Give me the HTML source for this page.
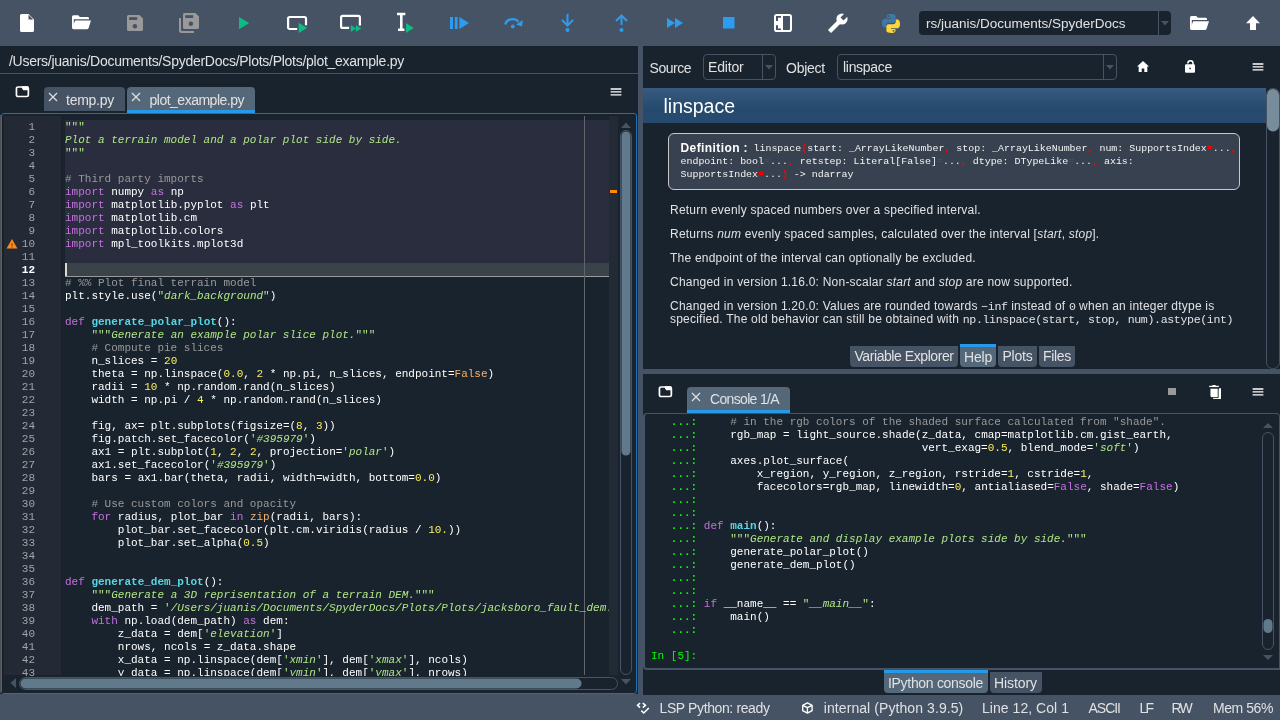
<!DOCTYPE html>
<html><head><meta charset="utf-8"><style>
html,body{margin:0;padding:0;}
body{width:1280px;height:720px;position:relative;overflow:hidden;background:#19232D;font-family:'Liberation Sans', sans-serif;}
body div, body svg{position:absolute;white-space:pre;}
.root{position:absolute;left:0;top:0;width:1280px;height:720px;will-change:transform;}
.code{font-family:'Liberation Mono', monospace;font-size:11px;line-height:13px;white-space:pre;}
</style></head><body>
<div class="root">
<div style="left:0px;top:0px;width:1280px;height:46px;background:#455364;"></div>
<div style="left:0px;top:46px;width:638px;height:648px;background:#19232D;"></div>
<div style="left:9px;top:51.65px;line-height:18px;font-family:'Liberation Sans', sans-serif;font-size:14px;color:#E0E1E3;letter-spacing:-0.268px;">/Users/juanis/Documents/SpyderDocs/Plots/Plots/plot_example.py</div>
<div style="left:0px;top:73px;width:638px;height:1px;background:#455364;"></div>
<div style="left:638px;top:46px;width:5px;height:648px;background:#455364;"></div>
<svg style="left:15px;top:86px" width="15" height="12" viewBox="0 0 15 12"><rect x="1.45" y="1" width="11.9" height="9.5" rx="1.6" fill="none" stroke="#fff" stroke-width="1.7"/><path d="M6.5 0.3H13.3V4.3H8.2L7 2.2Z" fill="#fff"/></svg>
<div style="left:44px;top:87px;width:81px;height:24px;background:#455364;border-radius:4px 4px 0 0;"></div>
<div style="left:127px;top:87px;width:128px;height:23px;background:#54687A;border-radius:4px 4px 0 0;"></div>
<div style="left:127px;top:110px;width:128px;height:3px;background:#259AE9;"></div>
<svg style="left:48px;top:92px" width="10" height="10" viewBox="0 0 10 10"><path d="M1 1L9 9M9 1L1 9" stroke="#E0E1E3" stroke-width="1.2"/></svg>
<svg style="left:131px;top:92px" width="10" height="10" viewBox="0 0 10 10"><path d="M1 1L9 9M9 1L1 9" stroke="#E0E1E3" stroke-width="1.2"/></svg>
<div style="left:66px;top:90.65px;line-height:18px;font-family:'Liberation Sans', sans-serif;font-size:14px;color:#E0E1E3;letter-spacing:-0.259px;">temp.py</div>
<div style="left:149.5px;top:90.65px;line-height:18px;font-family:'Liberation Sans', sans-serif;font-size:14px;color:#E0E1E3;letter-spacing:-0.497px;">plot_example.py</div>
<svg style="left:610px;top:87.75px" width="12" height="10" viewBox="0 0 12 10"><path d="M0.6 1H11.4M0.6 3.90H11.4M0.6 6.80H11.4" stroke="#fff" stroke-width="1.35"/></svg>
<div style="left:1px;top:113px;width:636px;height:581px;background:#19232D;box-sizing:border-box;border:1px solid #1A72BB;border-radius:3px;"></div>
<div style="left:0px;top:115px;width:1px;height:578px;background:#4b5159;"></div>
<div style="left:4px;top:116px;width:57px;height:559px;background:#232a35;"></div>
<div style="left:2px;top:116px;width:1px;height:577px;background:#1b1f24;"></div>
<div style="left:65px;top:120px;width:544px;height:143px;background:#292d3e;"></div>
<div style="left:65px;top:263px;width:544px;height:13px;background:#3a424a;"></div>
<div style="left:65px;top:276px;width:544px;height:1px;background:#9a9a9a;"></div>
<div style="left:65px;top:263px;width:2px;height:13px;background:#e0d8c8;"></div>
<div style="left:584px;top:116px;width:1px;height:559px;background:#60656a;"></div>
<div style="left:609px;top:116px;width:9px;height:559px;background:#222b35;"></div>
<div style="left:610px;top:190px;width:7px;height:3px;background:#ff8c00;"></div>
<svg style="left:618px;top:116px" width="18" height="575" viewBox="0 0 18 575"><path d="M3 12L8 6.5L13 12Z" fill="#455364"/><rect x="2.5" y="14.5" width="11" height="544" rx="5.5" fill="none" stroke="#455364"/><rect x="3.5" y="15.5" width="9" height="324" rx="4.5" fill="#60798B"/><path d="M3 563L8 568.5L13 563Z" fill="#455364"/></svg>
<svg style="left:2px;top:675px" width="616" height="18" viewBox="0 0 616 18"><path d="M14 3L8.5 8L14 13Z" fill="#455364"/><rect x="17.5" y="2.5" width="598" height="12" rx="6" fill="none" stroke="#455364"/><rect x="18.5" y="3.5" width="561" height="10" rx="5" fill="#60798B"/></svg>
<div class="code" style="left:65px;top:120.5px;width:544px;height:555px;overflow:hidden;"><span style="color:#b0e686">&quot;&quot;&quot;</span>
<span style="color:#b0e686;font-style:italic">Plot a terrain model and a polar plot side by side.</span>
<span style="color:#b0e686">&quot;&quot;&quot;</span>

<span style="color:#999999;"># Third party imports</span>
<span style="color:#c670e0;">import</span><span style="color:#ffffff;"> </span><span style="color:#ffffff;">numpy</span><span style="color:#ffffff;"> </span><span style="color:#c670e0;">as</span><span style="color:#ffffff;"> </span><span style="color:#ffffff;">np</span>
<span style="color:#c670e0;">import</span><span style="color:#ffffff;"> </span><span style="color:#ffffff;">matplotlib</span><span style="color:#ffffff;">.</span><span style="color:#ffffff;">pyplot</span><span style="color:#ffffff;"> </span><span style="color:#c670e0;">as</span><span style="color:#ffffff;"> </span><span style="color:#ffffff;">plt</span>
<span style="color:#c670e0;">import</span><span style="color:#ffffff;"> </span><span style="color:#ffffff;">matplotlib</span><span style="color:#ffffff;">.</span><span style="color:#ffffff;">cm</span>
<span style="color:#c670e0;">import</span><span style="color:#ffffff;"> </span><span style="color:#ffffff;">matplotlib</span><span style="color:#ffffff;">.</span><span style="color:#ffffff;">colors</span>
<span style="color:#c670e0;">import</span><span style="color:#ffffff;"> </span><span style="color:#ffffff;">mpl_toolkits</span><span style="color:#ffffff;">.</span><span style="color:#ffffff;">mplot3d</span>


<span style="color:#999999;"># %% Plot final terrain model</span>
<span style="color:#ffffff;">plt</span><span style="color:#ffffff;">.</span><span style="color:#ffffff;">style</span><span style="color:#ffffff;">.</span><span style="color:#ffffff;">use</span><span style="color:#ffffff;">(</span><span style="color:#b0e686">&quot;</span><span style="color:#b0e686;font-style:italic">dark_background</span><span style="color:#b0e686">&quot;</span><span style="color:#ffffff;">)</span>

<span style="color:#c670e0;">def</span><span style="color:#ffffff;"> </span><span style="color:#57d6e4;font-weight:bold;">generate_polar_plot</span><span style="color:#ffffff;">():</span>
<span style="color:#ffffff;">    </span><span style="color:#b0e686">&quot;&quot;&quot;</span><span style="color:#b0e686;font-style:italic">Generate an example polar slice plot.</span><span style="color:#b0e686">&quot;&quot;&quot;</span>
<span style="color:#ffffff;">    </span><span style="color:#999999;"># Compute pie slices</span>
<span style="color:#ffffff;">    </span><span style="color:#ffffff;">n_slices</span><span style="color:#ffffff;"> = </span><span style="color:#faed5c;">20</span>
<span style="color:#ffffff;">    </span><span style="color:#ffffff;">theta</span><span style="color:#ffffff;"> = </span><span style="color:#ffffff;">np</span><span style="color:#ffffff;">.</span><span style="color:#ffffff;">linspace</span><span style="color:#ffffff;">(</span><span style="color:#faed5c;">0.0</span><span style="color:#ffffff;">, </span><span style="color:#faed5c;">2</span><span style="color:#ffffff;"> * </span><span style="color:#ffffff;">np</span><span style="color:#ffffff;">.</span><span style="color:#ffffff;">pi</span><span style="color:#ffffff;">, </span><span style="color:#ffffff;">n_slices</span><span style="color:#ffffff;">, </span><span style="color:#ffffff;">endpoint</span><span style="color:#ffffff;">=</span><span style="color:#fab16c;">False</span><span style="color:#ffffff;">)</span>
<span style="color:#ffffff;">    </span><span style="color:#ffffff;">radii</span><span style="color:#ffffff;"> = </span><span style="color:#faed5c;">10</span><span style="color:#ffffff;"> * </span><span style="color:#ffffff;">np</span><span style="color:#ffffff;">.</span><span style="color:#ffffff;">random</span><span style="color:#ffffff;">.</span><span style="color:#ffffff;">rand</span><span style="color:#ffffff;">(</span><span style="color:#ffffff;">n_slices</span><span style="color:#ffffff;">)</span>
<span style="color:#ffffff;">    </span><span style="color:#ffffff;">width</span><span style="color:#ffffff;"> = </span><span style="color:#ffffff;">np</span><span style="color:#ffffff;">.</span><span style="color:#ffffff;">pi</span><span style="color:#ffffff;"> / </span><span style="color:#faed5c;">4</span><span style="color:#ffffff;"> * </span><span style="color:#ffffff;">np</span><span style="color:#ffffff;">.</span><span style="color:#ffffff;">random</span><span style="color:#ffffff;">.</span><span style="color:#ffffff;">rand</span><span style="color:#ffffff;">(</span><span style="color:#ffffff;">n_slices</span><span style="color:#ffffff;">)</span>

<span style="color:#ffffff;">    </span><span style="color:#ffffff;">fig</span><span style="color:#ffffff;">, </span><span style="color:#ffffff;">ax</span><span style="color:#ffffff;">= </span><span style="color:#ffffff;">plt</span><span style="color:#ffffff;">.</span><span style="color:#ffffff;">subplots</span><span style="color:#ffffff;">(</span><span style="color:#ffffff;">figsize</span><span style="color:#ffffff;">=(</span><span style="color:#faed5c;">8</span><span style="color:#ffffff;">, </span><span style="color:#faed5c;">3</span><span style="color:#ffffff;">))</span>
<span style="color:#ffffff;">    </span><span style="color:#ffffff;">fig</span><span style="color:#ffffff;">.</span><span style="color:#ffffff;">patch</span><span style="color:#ffffff;">.</span><span style="color:#ffffff;">set_facecolor</span><span style="color:#ffffff;">(</span><span style="color:#b0e686">&#x27;</span><span style="color:#b0e686;font-style:italic">#395979</span><span style="color:#b0e686">&#x27;</span><span style="color:#ffffff;">)</span>
<span style="color:#ffffff;">    </span><span style="color:#ffffff;">ax1</span><span style="color:#ffffff;"> = </span><span style="color:#ffffff;">plt</span><span style="color:#ffffff;">.</span><span style="color:#ffffff;">subplot</span><span style="color:#ffffff;">(</span><span style="color:#faed5c;">1</span><span style="color:#ffffff;">, </span><span style="color:#faed5c;">2</span><span style="color:#ffffff;">, </span><span style="color:#faed5c;">2</span><span style="color:#ffffff;">, </span><span style="color:#ffffff;">projection</span><span style="color:#ffffff;">=</span><span style="color:#b0e686">&#x27;</span><span style="color:#b0e686;font-style:italic">polar</span><span style="color:#b0e686">&#x27;</span><span style="color:#ffffff;">)</span>
<span style="color:#ffffff;">    </span><span style="color:#ffffff;">ax1</span><span style="color:#ffffff;">.</span><span style="color:#ffffff;">set_facecolor</span><span style="color:#ffffff;">(</span><span style="color:#b0e686">&#x27;</span><span style="color:#b0e686;font-style:italic">#395979</span><span style="color:#b0e686">&#x27;</span><span style="color:#ffffff;">)</span>
<span style="color:#ffffff;">    </span><span style="color:#ffffff;">bars</span><span style="color:#ffffff;"> = </span><span style="color:#ffffff;">ax1</span><span style="color:#ffffff;">.</span><span style="color:#ffffff;">bar</span><span style="color:#ffffff;">(</span><span style="color:#ffffff;">theta</span><span style="color:#ffffff;">, </span><span style="color:#ffffff;">radii</span><span style="color:#ffffff;">, </span><span style="color:#ffffff;">width</span><span style="color:#ffffff;">=</span><span style="color:#ffffff;">width</span><span style="color:#ffffff;">, </span><span style="color:#ffffff;">bottom</span><span style="color:#ffffff;">=</span><span style="color:#faed5c;">0.0</span><span style="color:#ffffff;">)</span>

<span style="color:#ffffff;">    </span><span style="color:#999999;"># Use custom colors and opacity</span>
<span style="color:#ffffff;">    </span><span style="color:#c670e0;">for</span><span style="color:#ffffff;"> </span><span style="color:#ffffff;">radius</span><span style="color:#ffffff;">, </span><span style="color:#ffffff;">plot_bar</span><span style="color:#ffffff;"> </span><span style="color:#c670e0;">in</span><span style="color:#ffffff;"> </span><span style="color:#fab16c;">zip</span><span style="color:#ffffff;">(</span><span style="color:#ffffff;">radii</span><span style="color:#ffffff;">, </span><span style="color:#ffffff;">bars</span><span style="color:#ffffff;">):</span>
<span style="color:#ffffff;">        </span><span style="color:#ffffff;">plot_bar</span><span style="color:#ffffff;">.</span><span style="color:#ffffff;">set_facecolor</span><span style="color:#ffffff;">(</span><span style="color:#ffffff;">plt</span><span style="color:#ffffff;">.</span><span style="color:#ffffff;">cm</span><span style="color:#ffffff;">.</span><span style="color:#ffffff;">viridis</span><span style="color:#ffffff;">(</span><span style="color:#ffffff;">radius</span><span style="color:#ffffff;"> / </span><span style="color:#faed5c;">10.</span><span style="color:#ffffff;">))</span>
<span style="color:#ffffff;">        </span><span style="color:#ffffff;">plot_bar</span><span style="color:#ffffff;">.</span><span style="color:#ffffff;">set_alpha</span><span style="color:#ffffff;">(</span><span style="color:#faed5c;">0.5</span><span style="color:#ffffff;">)</span>


<span style="color:#c670e0;">def</span><span style="color:#ffffff;"> </span><span style="color:#57d6e4;font-weight:bold;">generate_dem_plot</span><span style="color:#ffffff;">():</span>
<span style="color:#ffffff;">    </span><span style="color:#b0e686">&quot;&quot;&quot;</span><span style="color:#b0e686;font-style:italic">Generate a 3D reprisentation of a terrain DEM.</span><span style="color:#b0e686">&quot;&quot;&quot;</span>
<span style="color:#ffffff;">    </span><span style="color:#ffffff;">dem_path</span><span style="color:#ffffff;"> = </span><span style="color:#b0e686">&#x27;</span><span style="color:#b0e686;font-style:italic">/Users/juanis/Documents/SpyderDocs/Plots/Plots/jacksboro_fault_dem.npz</span><span style="color:#b0e686">&#x27;</span>
<span style="color:#ffffff;">    </span><span style="color:#c670e0;">with</span><span style="color:#ffffff;"> </span><span style="color:#ffffff;">np</span><span style="color:#ffffff;">.</span><span style="color:#ffffff;">load</span><span style="color:#ffffff;">(</span><span style="color:#ffffff;">dem_path</span><span style="color:#ffffff;">) </span><span style="color:#c670e0;">as</span><span style="color:#ffffff;"> </span><span style="color:#ffffff;">dem</span><span style="color:#ffffff;">:</span>
<span style="color:#ffffff;">        </span><span style="color:#ffffff;">z_data</span><span style="color:#ffffff;"> = </span><span style="color:#ffffff;">dem</span><span style="color:#ffffff;">[</span><span style="color:#b0e686">&#x27;</span><span style="color:#b0e686;font-style:italic">elevation</span><span style="color:#b0e686">&#x27;</span><span style="color:#ffffff;">]</span>
<span style="color:#ffffff;">        </span><span style="color:#ffffff;">nrows</span><span style="color:#ffffff;">, </span><span style="color:#ffffff;">ncols</span><span style="color:#ffffff;"> = </span><span style="color:#ffffff;">z_data</span><span style="color:#ffffff;">.</span><span style="color:#ffffff;">shape</span>
<span style="color:#ffffff;">        </span><span style="color:#ffffff;">x_data</span><span style="color:#ffffff;"> = </span><span style="color:#ffffff;">np</span><span style="color:#ffffff;">.</span><span style="color:#ffffff;">linspace</span><span style="color:#ffffff;">(</span><span style="color:#ffffff;">dem</span><span style="color:#ffffff;">[</span><span style="color:#b0e686">&#x27;</span><span style="color:#b0e686;font-style:italic">xmin</span><span style="color:#b0e686">&#x27;</span><span style="color:#ffffff;">], </span><span style="color:#ffffff;">dem</span><span style="color:#ffffff;">[</span><span style="color:#b0e686">&#x27;</span><span style="color:#b0e686;font-style:italic">xmax</span><span style="color:#b0e686">&#x27;</span><span style="color:#ffffff;">], </span><span style="color:#ffffff;">ncols</span><span style="color:#ffffff;">)</span>
<span style="color:#ffffff;">        </span><span style="color:#ffffff;">y_data</span><span style="color:#ffffff;"> = </span><span style="color:#ffffff;">np</span><span style="color:#ffffff;">.</span><span style="color:#ffffff;">linspace</span><span style="color:#ffffff;">(</span><span style="color:#ffffff;">dem</span><span style="color:#ffffff;">[</span><span style="color:#b0e686">&#x27;</span><span style="color:#b0e686;font-style:italic">ymin</span><span style="color:#b0e686">&#x27;</span><span style="color:#ffffff;">], </span><span style="color:#ffffff;">dem</span><span style="color:#ffffff;">[</span><span style="color:#b0e686">&#x27;</span><span style="color:#b0e686;font-style:italic">ymax</span><span style="color:#b0e686">&#x27;</span><span style="color:#ffffff;">], </span><span style="color:#ffffff;">nrows</span><span style="color:#ffffff;">)</span></div>
<div class="code" style="left:0px;top:120.5px;width:35px;height:555px;overflow:hidden;color:#a0a4a8;text-align:right;"> 1
 2
 3
 4
 5
 6
 7
 8
 9
10
11
<span style="color:#fff;font-weight:bold">12</span>
13
14
15
16
17
18
19
20
21
22
23
24
25
26
27
28
29
30
31
32
33
34
35
36
37
38
39
40
41
42
43</div>
<svg style="left:5.5px;top:238.5px" width="12" height="10" viewBox="0 0 12 10"><path d="M6 0L11.4 9.4H0.6Z" fill="#ff8914"/><rect x="5.45" y="4.3" width="1.1" height="2.6" rx="0.5" fill="#5a3a1a"/><rect x="5.45" y="7.6" width="1.1" height="1" fill="#5a3a1a"/></svg>
<div style="left:649.5px;top:58.65px;line-height:18px;font-family:'Liberation Sans', sans-serif;font-size:14px;color:#E0E1E3;letter-spacing:-0.460px;">Source</div>
<div style="left:703px;top:54px;width:73px;height:26px;background:#19232D;box-sizing:border-box;border:1px solid #455364;border-radius:4px;"></div>
<div style="left:762px;top:55px;width:1px;height:24px;background:#455364;"></div>
<svg style="left:765px;top:65px" width="8" height="5" viewBox="0 0 8 5"><path d="M0 0H8L4 4.5Z" fill="#455364"/></svg>
<div style="left:708px;top:57.65px;line-height:18px;font-family:'Liberation Sans', sans-serif;font-size:14px;color:#E0E1E3;letter-spacing:-0.180px;">Editor</div>
<div style="left:786px;top:58.65px;line-height:18px;font-family:'Liberation Sans', sans-serif;font-size:14px;color:#E0E1E3;letter-spacing:-0.245px;">Object</div>
<div style="left:837px;top:54px;width:280px;height:26px;background:#19232D;box-sizing:border-box;border:1px solid #455364;border-radius:4px;"></div>
<div style="left:1103px;top:55px;width:1px;height:24px;background:#455364;"></div>
<svg style="left:1106px;top:65px" width="8" height="5" viewBox="0 0 8 5"><path d="M0 0H8L4 4.5Z" fill="#455364"/></svg>
<div style="left:843px;top:57.65px;line-height:18px;font-family:'Liberation Sans', sans-serif;font-size:14px;color:#E0E1E3;letter-spacing:-0.297px;">linspace</div>
<svg style="left:1137px;top:61px" width="12" height="11" viewBox="0 0 12 11"><path d="M6 0L12 5.5H10.3V11H7.3V7.5H4.7V11H1.7V5.5H0Z" fill="#fff"/></svg>
<svg style="left:1184px;top:59px" width="12" height="15" viewBox="0 0 12 15"><path d="M3.9 4.6V4.3A2.55 2.55 0 0 1 9 4.3V6" fill="none" stroke="#fff" stroke-width="1.5"/><rect x="1" y="5.3" width="10" height="8.5" rx="1.3" fill="#fff"/><rect x="5.3" y="8.7" width="1.5" height="1.5" fill="#19232D"/></svg>
<svg style="left:1252px;top:62.65px" width="12" height="10" viewBox="0 0 12 10"><path d="M0.6 1H11.4M0.6 3.90H11.4M0.6 6.80H11.4" stroke="#fff" stroke-width="1.35"/></svg>
<div style="left:643px;top:88px;width:623px;height:35px;background:linear-gradient(#395b81 0%,#2a4d72 45%,#264a6e 60%,#274b6f 100%);"></div>
<div style="left:663.5px;top:93.74px;line-height:25px;font-family:'Liberation Sans', sans-serif;font-size:19.5px;color:#ffffff;letter-spacing:-0.006px;">linspace</div>
<div style="left:1266px;top:88px;width:14px;height:281px;background:#19232D;"></div>
<svg style="left:1266px;top:88px" width="14" height="281" viewBox="0 0 14 281"><rect x="1" y="1" width="12" height="42.5" rx="6" fill="#788D9C"/><rect x="0.5" y="0.5" width="13" height="280" rx="6" fill="none" stroke="#455364"/></svg>
<div style="left:668px;top:133px;width:572px;height:57px;background:#37414F;box-sizing:border-box;border:1px solid #c8c8c8;border-radius:6px;"></div>
<div style="left:680.5px;top:140.34px;line-height:16px;font-family:'Liberation Sans', sans-serif;font-size:12px;color:#ffffff;font-weight:bold;letter-spacing:0.404px;">Definition :</div>
<div style="left:753.5px;top:142.9px;font-family:'Liberation Mono', monospace;font-size:9.95px;line-height:12px;color:#f4f4f4"><span style="color:#f4f4f4">linspace</span><span style="color:#ff0000;font-weight:bold">(</span><span style="color:#f4f4f4">start: _ArrayLikeNumber</span><span style="color:#ff0000;font-weight:bold">,</span><span style="color:#f4f4f4"> stop: _ArrayLikeNumber</span><span style="color:#ff0000;font-weight:bold">,</span><span style="color:#f4f4f4"> num: SupportsIndex</span><span style="color:#ff0000;font-weight:bold">=</span><span style="color:#f4f4f4">...</span><span style="color:#ff0000;font-weight:bold">,</span></div>
<div style="left:680.5px;top:155.9px;font-family:'Liberation Mono', monospace;font-size:9.95px;line-height:12px;color:#f4f4f4"><span style="color:#f4f4f4">endpoint: bool</span><span style="color:#ff0000;font-weight:bold">=</span><span style="color:#f4f4f4">...</span><span style="color:#ff0000;font-weight:bold">,</span><span style="color:#f4f4f4"> retstep: Literal[False]</span><span style="color:#ff0000;font-weight:bold">=</span><span style="color:#f4f4f4">...</span><span style="color:#ff0000;font-weight:bold">,</span><span style="color:#f4f4f4"> dtype: DTypeLike</span><span style="color:#ff0000;font-weight:bold">=</span><span style="color:#f4f4f4">...</span><span style="color:#ff0000;font-weight:bold">,</span><span style="color:#f4f4f4"> axis:</span></div>
<div style="left:680.5px;top:168.9px;font-family:'Liberation Mono', monospace;font-size:9.95px;line-height:12px;color:#f4f4f4"><span style="color:#f4f4f4">SupportsIndex</span><span style="color:#ff0000;font-weight:bold">=</span><span style="color:#f4f4f4">...</span><span style="color:#ff0000;font-weight:bold">)</span><span style="color:#f4f4f4"> -&gt; ndarray</span></div>
<div style="left:670px;top:202.8px;font-size:12px;line-height:14px;color:#E0E1E3;letter-spacing:0.22px">Return evenly spaced numbers over a specified interval.</div>
<div style="left:670px;top:226.8px;font-size:12px;line-height:14px;color:#E0E1E3;letter-spacing:0.22px">Returns <i>num</i> evenly spaced samples, calculated over the interval [<i>start</i>, <i>stop</i>].</div>
<div style="left:670px;top:250.8px;font-size:12px;line-height:14px;color:#E0E1E3;letter-spacing:0.22px">The endpoint of the interval can optionally be excluded.</div>
<div style="left:670px;top:274.8px;font-size:12px;line-height:14px;color:#E0E1E3;letter-spacing:0.22px">Changed in version 1.16.0: Non-scalar <i>start</i> and <i>stop</i> are now supported.</div>
<div style="left:670px;top:298.8px;font-size:12px;line-height:14px;color:#E0E1E3;letter-spacing:0.22px">Changed in version 1.20.0: Values are rounded towards <span style="font-family:'Liberation Mono', monospace;font-size:11.6px;letter-spacing:-0.36px">−inf</span> instead of <span style="font-family:'Liberation Mono', monospace;font-size:11.6px;letter-spacing:-0.36px">0</span> when an integer dtype is</div>
<div style="left:670px;top:311.8px;font-size:12px;line-height:14px;color:#E0E1E3;letter-spacing:0.22px">specified. The old behavior can still be obtained with <span style="font-family:'Liberation Mono', monospace;font-size:11.6px;letter-spacing:-0.36px">np.linspace(start, stop, num).astype(int)</span></div>
<div style="left:850px;top:346px;width:108px;height:21px;background:#455364;border-radius:0 0 4px 4px;"></div>
<div style="left:960px;top:347px;width:36px;height:20px;background:#54687A;border-radius:0 0 4px 4px;"></div>
<div style="left:960px;top:344px;width:36px;height:3px;background:#259AE9;"></div>
<div style="left:998px;top:346px;width:39px;height:21px;background:#455364;border-radius:0 0 4px 4px;"></div>
<div style="left:1039px;top:346px;width:36px;height:21px;background:#455364;border-radius:0 0 4px 4px;"></div>
<div style="left:854.5px;top:346.65px;line-height:18px;font-family:'Liberation Sans', sans-serif;font-size:14px;color:#E0E1E3;letter-spacing:-0.433px;">Variable Explorer</div>
<div style="left:964px;top:347.65px;line-height:18px;font-family:'Liberation Sans', sans-serif;font-size:14px;color:#E0E1E3;letter-spacing:-0.199px;">Help</div>
<div style="left:1002.5px;top:346.65px;line-height:18px;font-family:'Liberation Sans', sans-serif;font-size:14px;color:#E0E1E3;letter-spacing:-0.225px;">Plots</div>
<div style="left:1043px;top:346.65px;line-height:18px;font-family:'Liberation Sans', sans-serif;font-size:14px;color:#E0E1E3;letter-spacing:-0.312px;">Files</div>
<div style="left:643px;top:369px;width:637px;height:5px;background:#455364;"></div>
<svg style="left:658px;top:386px" width="15" height="12" viewBox="0 0 15 12"><rect x="1.45" y="1" width="11.9" height="9.5" rx="1.6" fill="none" stroke="#fff" stroke-width="1.7"/><path d="M6.5 0.3H13.3V4.3H8.2L7 2.2Z" fill="#fff"/></svg>
<div style="left:687px;top:387px;width:103px;height:23px;background:#54687A;border-radius:4px 4px 0 0;"></div>
<div style="left:687px;top:410px;width:103px;height:3px;background:#259AE9;"></div>
<svg style="left:691px;top:392px" width="10" height="10" viewBox="0 0 10 10"><path d="M1 1L9 9M9 1L1 9" stroke="#E0E1E3" stroke-width="1.2"/></svg>
<div style="left:710px;top:390.40px;line-height:18px;font-family:'Liberation Sans', sans-serif;font-size:14px;color:#E0E1E3;letter-spacing:-0.662px;">Console 1/A</div>
<div style="left:1168px;top:388px;width:8px;height:7px;background:#999999;"></div>
<svg style="left:1208px;top:384px" width="14" height="16" viewBox="0 0 14 16"><rect x="1.2" y="1.8" width="9.6" height="1.3" fill="#fff"/><rect x="4.2" y="0.9" width="3.6" height="1.3" rx="0.6" fill="#fff"/><path d="M5 5.2H10.8L11 4.2H13V15H5Z" fill="#fff"/><path d="M2 4.2H10.2V13.6H3.4L2 12.2Z" fill="#fff" stroke="#19232D" stroke-width="0.9"/></svg>
<svg style="left:1252px;top:387.75px" width="12" height="10" viewBox="0 0 12 10"><path d="M0.6 1H11.4M0.6 3.90H11.4M0.6 6.80H11.4" stroke="#fff" stroke-width="1.35"/></svg>
<div style="left:643px;top:413px;width:637px;height:257px;background:#19232D;box-sizing:border-box;border:1px solid #455364;border-left-width:2px;border-bottom-width:2px;border-radius:4px 4px 0 4px;"></div>
<svg style="left:1261px;top:420px" width="14" height="248" viewBox="0 0 14 248"><path d="M2 8L7 3L12 8Z" fill="#455364"/><rect x="1.5" y="12.5" width="11" height="217" rx="5.5" fill="none" stroke="#455364"/><rect x="2.5" y="199" width="9" height="14" rx="4.5" fill="#60798B"/><path d="M2 235L7 240L12 235Z" fill="#455364"/></svg>
<div class="code" style="left:651px;top:415.5px;width:608px;height:252px;overflow:hidden;"><span style="color:#00ff00">   </span><span style="color:#00ff00;font-weight:bold">...:</span> <span style="color:#ffffff;">    </span><span style="color:#999999;"># in the rgb colors of the shaded surface calculated from &quot;shade&quot;.</span>
<span style="color:#00ff00">   </span><span style="color:#00ff00;font-weight:bold">...:</span> <span style="color:#ffffff;">    </span><span style="color:#ffffff;">rgb_map</span><span style="color:#ffffff;"> = </span><span style="color:#ffffff;">light_source</span><span style="color:#ffffff;">.</span><span style="color:#ffffff;">shade</span><span style="color:#ffffff;">(</span><span style="color:#ffffff;">z_data</span><span style="color:#ffffff;">, </span><span style="color:#ffffff;">cmap</span><span style="color:#ffffff;">=</span><span style="color:#ffffff;">matplotlib</span><span style="color:#ffffff;">.</span><span style="color:#ffffff;">cm</span><span style="color:#ffffff;">.</span><span style="color:#ffffff;">gist_earth</span><span style="color:#ffffff;">,</span>
<span style="color:#00ff00">   </span><span style="color:#00ff00;font-weight:bold">...:</span> <span style="color:#ffffff;">                                 </span><span style="color:#ffffff;">vert_exag</span><span style="color:#ffffff;">=</span><span style="color:#faed5c;">0.5</span><span style="color:#ffffff;">, </span><span style="color:#ffffff;">blend_mode</span><span style="color:#ffffff;">=</span><span style="color:#b0e686">&#x27;</span><span style="color:#b0e686;font-style:italic">soft</span><span style="color:#b0e686">&#x27;</span><span style="color:#ffffff;">)</span>
<span style="color:#00ff00">   </span><span style="color:#00ff00;font-weight:bold">...:</span> <span style="color:#ffffff;">    </span><span style="color:#ffffff;">axes</span><span style="color:#ffffff;">.</span><span style="color:#ffffff;">plot_surface</span><span style="color:#ffffff;">(</span>
<span style="color:#00ff00">   </span><span style="color:#00ff00;font-weight:bold">...:</span> <span style="color:#ffffff;">        </span><span style="color:#ffffff;">x_region</span><span style="color:#ffffff;">, </span><span style="color:#ffffff;">y_region</span><span style="color:#ffffff;">, </span><span style="color:#ffffff;">z_region</span><span style="color:#ffffff;">, </span><span style="color:#ffffff;">rstride</span><span style="color:#ffffff;">=</span><span style="color:#faed5c;">1</span><span style="color:#ffffff;">, </span><span style="color:#ffffff;">cstride</span><span style="color:#ffffff;">=</span><span style="color:#faed5c;">1</span><span style="color:#ffffff;">,</span>
<span style="color:#00ff00">   </span><span style="color:#00ff00;font-weight:bold">...:</span> <span style="color:#ffffff;">        </span><span style="color:#ffffff;">facecolors</span><span style="color:#ffffff;">=</span><span style="color:#ffffff;">rgb_map</span><span style="color:#ffffff;">, </span><span style="color:#ffffff;">linewidth</span><span style="color:#ffffff;">=</span><span style="color:#faed5c;">0</span><span style="color:#ffffff;">, </span><span style="color:#ffffff;">antialiased</span><span style="color:#ffffff;">=</span><span style="color:#c670e0;">False</span><span style="color:#ffffff;">, </span><span style="color:#ffffff;">shade</span><span style="color:#ffffff;">=</span><span style="color:#c670e0;">False</span><span style="color:#ffffff;">)</span>
<span style="color:#00ff00">   </span><span style="color:#00ff00;font-weight:bold">...:</span> 
<span style="color:#00ff00">   </span><span style="color:#00ff00;font-weight:bold">...:</span> 
<span style="color:#00ff00">   </span><span style="color:#00ff00;font-weight:bold">...:</span> <span style="color:#c670e0;">def</span><span style="color:#ffffff;"> </span><span style="color:#57d6e4;font-weight:bold;">main</span><span style="color:#ffffff;">():</span>
<span style="color:#00ff00">   </span><span style="color:#00ff00;font-weight:bold">...:</span> <span style="color:#ffffff;">    </span><span style="color:#b0e686">&quot;&quot;&quot;</span><span style="color:#b0e686;font-style:italic">Generate and display example plots side by side.</span><span style="color:#b0e686">&quot;&quot;&quot;</span>
<span style="color:#00ff00">   </span><span style="color:#00ff00;font-weight:bold">...:</span> <span style="color:#ffffff;">    </span><span style="color:#ffffff;">generate_polar_plot</span><span style="color:#ffffff;">()</span>
<span style="color:#00ff00">   </span><span style="color:#00ff00;font-weight:bold">...:</span> <span style="color:#ffffff;">    </span><span style="color:#ffffff;">generate_dem_plot</span><span style="color:#ffffff;">()</span>
<span style="color:#00ff00">   </span><span style="color:#00ff00;font-weight:bold">...:</span> 
<span style="color:#00ff00">   </span><span style="color:#00ff00;font-weight:bold">...:</span> 
<span style="color:#00ff00">   </span><span style="color:#00ff00;font-weight:bold">...:</span> <span style="color:#c670e0;">if</span><span style="color:#ffffff;"> </span><span style="color:#ffffff;">__name__</span><span style="color:#ffffff;"> == </span><span style="color:#b0e686">&quot;</span><span style="color:#b0e686;font-style:italic">__main__</span><span style="color:#b0e686">&quot;</span><span style="color:#ffffff;">:</span>
<span style="color:#00ff00">   </span><span style="color:#00ff00;font-weight:bold">...:</span> <span style="color:#ffffff;">    </span><span style="color:#ffffff;">main</span><span style="color:#ffffff;">()</span>
<span style="color:#00ff00">   </span><span style="color:#00ff00;font-weight:bold">...:</span> 

<span style="color:#00ff00">In [</span><span style="color:#00ff00">5</span><span style="color:#00ff00">]:</span> </div>
<div style="left:884px;top:670px;width:104px;height:3px;background:#259AE9;"></div>
<div style="left:884px;top:673px;width:104px;height:20px;background:#54687A;border-radius:0 0 4px 4px;"></div>
<div style="left:990px;top:672px;width:52px;height:21px;background:#455364;border-radius:0 0 4px 4px;"></div>
<div style="left:888px;top:673.65px;line-height:18px;font-family:'Liberation Sans', sans-serif;font-size:14px;color:#E0E1E3;letter-spacing:-0.308px;">IPython console</div>
<div style="left:994px;top:673.65px;line-height:18px;font-family:'Liberation Sans', sans-serif;font-size:14px;color:#E0E1E3;letter-spacing:-0.080px;">History</div>
<div style="left:0px;top:695px;width:1280px;height:25px;background:#455364;"></div>
<div style="left:0px;top:694px;width:643px;height:1px;background:#455364;"></div>
<svg style="left:636px;top:701px" width="14" height="14" viewBox="0 0 14 14"><path d="M4 2L1.6 4.3L4 6.6M6.8 2L9.4 4.3L6.8 6.6" fill="none" stroke="#fff" stroke-width="1.6"/><path d="M5.3 9.6L7.8 12L12.8 7" fill="none" stroke="#fff" stroke-width="1.6"/></svg>
<div style="left:659.5px;top:698.65px;line-height:18px;font-family:'Liberation Sans', sans-serif;font-size:14px;color:#E0E1E3;letter-spacing:-0.381px;">LSP Python: ready</div>
<svg style="left:801.5px;top:701.5px" width="11" height="12" viewBox="0 0 11 12"><path d="M5.4 0.9L10.1 3.3V8.7L5.4 11.1L0.7 8.7V3.3Z M0.7 3.3L5.4 5.7L10.1 3.3 M5.4 5.7V11.1" fill="none" stroke="#fff" stroke-width="1.4" stroke-linejoin="round"/></svg>
<div style="left:823.75px;top:698.65px;line-height:18px;font-family:'Liberation Sans', sans-serif;font-size:14px;color:#E0E1E3;letter-spacing:0.080px;">internal (Python 3.9.5)</div>
<div style="left:982px;top:698.65px;line-height:18px;font-family:'Liberation Sans', sans-serif;font-size:14px;color:#E0E1E3;letter-spacing:0.042px;">Line 12, Col 1</div>
<div style="left:1088.5px;top:698.65px;line-height:18px;font-family:'Liberation Sans', sans-serif;font-size:14px;color:#E0E1E3;letter-spacing:-1.016px;">ASCII</div>
<div style="left:1139.5px;top:698.65px;line-height:18px;font-family:'Liberation Sans', sans-serif;font-size:14px;color:#E0E1E3;letter-spacing:-1.672px;">LF</div>
<div style="left:1171.5px;top:698.65px;line-height:18px;font-family:'Liberation Sans', sans-serif;font-size:14px;color:#E0E1E3;letter-spacing:-1.789px;">RW</div>
<div style="left:1213px;top:698.65px;line-height:18px;font-family:'Liberation Sans', sans-serif;font-size:14px;color:#E0E1E3;letter-spacing:-0.433px;">Mem 56%</div>
<svg style="left:20px;top:14px" width="14" height="18" viewBox="0 0 14 18"><path d="M1.5 0H8.5L14 5.5V16.5A1.5 1.5 0 0 1 12.5 18H1.5A1.5 1.5 0 0 1 0 16.5V1.5A1.5 1.5 0 0 1 1.5 0Z" fill="#ffffff"/><path d="M8.5 0.8V5.5H13.2" fill="#455364"/></svg>
<svg style="left:72px;top:15px" width="19" height="15" viewBox="0 0 19 14.6"><path d="M1.5 0H6.2L7.9 1.7H15.6A1.4 1.4 0 0 1 17 3.1V4.1H1.8V10.5L0 13V1.5A1.5 1.5 0 0 1 1.5 0Z" fill="#ffffff"/><path d="M3.2 5.3H19L16.6 12.7A1.9 1.9 0 0 1 14.8 14H1.4A1.4 1.4 0 0 1 0 12.6Z" fill="#ffffff"/></svg>
<svg style="left:127px;top:15px" width="16" height="16" viewBox="0 0 16 16"><path d="M1.5 0H12.5L16 3.5V14.5A1.5 1.5 0 0 1 14.5 16H1.5A1.5 1.5 0 0 1 0 14.5V1.5A1.5 1.5 0 0 1 1.5 0Z" fill="#999999"/><rect x="2.2" y="2.2" width="8" height="2.8" fill="#455364"/><circle cx="7.9" cy="11.3" r="2.2" fill="#455364"/></svg>
<svg style="left:179px;top:13px" width="20" height="20" viewBox="0 0 20 20"><path d="M0 5V17.5A2.5 2.5 0 0 0 2.5 20H15V18H3A1 1 0 0 1 2 17V5Z" fill="#999999"/><path d="M5.5 0H16.5L20 3.5V14.5A1.5 1.5 0 0 1 18.5 16H5.5A1.5 1.5 0 0 1 4 14.5V1.5A1.5 1.5 0 0 1 5.5 0Z" fill="#999999"/><rect x="6.2" y="2.2" width="8" height="2.8" fill="#455364"/><circle cx="11.9" cy="10.8" r="2.2" fill="#455364"/></svg>
<svg style="left:239px;top:16.8px" width="10.2" height="12.3" viewBox="0 0 10.2 12.3"><path d="M0 0L10.2 6.15L0 12.3Z" fill="#0dbb85"/></svg>
<svg style="left:287px;top:15px" width="21" height="19" viewBox="0 0 21 19"><path d="M10.2 14H2.6A1.5 1.5 0 0 1 1.1 12.5V3.5A1.5 1.5 0 0 1 2.6 2H17.5A1.5 1.5 0 0 1 19 3.5V10.2" fill="none" stroke="#ffffff" stroke-width="2.2"/><path d="M11.7 7.8L20.1 12.9L11.7 18Z" fill="#0dbb85"/></svg>
<svg style="left:340px;top:14px" width="22" height="19" viewBox="0 0 22 19"><path d="M9.1 13.9H2.6A1.5 1.5 0 0 1 1.1 12.4V3.4A1.5 1.5 0 0 1 2.6 1.9H18.4A1.5 1.5 0 0 1 19.9 3.4V11.6" fill="none" stroke="#ffffff" stroke-width="2.2"/><path d="M10.8 10.9L16 14.5L10.8 18Z M15.8 10.9L21.2 14.5L15.8 18Z" fill="#0dbb85"/></svg>
<svg style="left:396px;top:12px" width="19" height="22" viewBox="0 0 19 22"><path d="M1 2H9.3M2 17.8H8.4M5.3 2V17.8" fill="none" stroke="#ffffff" stroke-width="2.6"/><path d="M10 11.1L17.7 16L10 21Z" fill="#0dbb85"/></svg>
<svg style="left:449.5px;top:17px" width="19" height="12" viewBox="0 0 19 12"><rect x="0" y="0" width="3" height="12" fill="#2d9cf0"/><rect x="4.8" y="0" width="2.8" height="12" fill="#2d9cf0"/><path d="M9.4 0L19 6L9.4 12Z" fill="#2d9cf0"/></svg>
<svg style="left:504px;top:17px" width="20" height="12" viewBox="0 0 20 12"><path d="M1.3 7.4A7.3 6.6 0 0 1 14.4 4.9" fill="none" stroke="#2d9cf0" stroke-width="2.3"/><path d="M12 7.6L18.8 3L18 9.4Z" fill="#2d9cf0"/><circle cx="8.8" cy="9.5" r="1.9" fill="#2d9cf0"/></svg>
<svg style="left:560.5px;top:14px" width="13" height="18" viewBox="0 0 13 18"><path d="M6.5 0V10" stroke="#2d9cf0" stroke-width="2"/><path d="M1 6L6.5 11.5L12 6" fill="none" stroke="#2d9cf0" stroke-width="2"/><circle cx="6.5" cy="16" r="2" fill="#2d9cf0"/></svg>
<svg style="left:614.5px;top:14px" width="13" height="18" viewBox="0 0 13 18"><path d="M6.5 2V11" stroke="#2d9cf0" stroke-width="2"/><path d="M1 7L6.5 1.5L12 7" fill="none" stroke="#2d9cf0" stroke-width="2"/><circle cx="6.5" cy="16" r="2" fill="#2d9cf0"/></svg>
<svg style="left:667px;top:18px" width="16" height="10" viewBox="0 0 16 10"><path d="M0 0L8 5L0 10Z M8 0L16 5L8 10Z" fill="#2d9cf0"/></svg>
<svg style="left:723px;top:17px" width="12" height="12" viewBox="0 0 12 12"><rect x="0" y="0" width="11.5" height="11.5" fill="#2d9cf0"/></svg>
<svg style="left:774px;top:14px" width="18" height="18" viewBox="0 0 18 18"><rect x="1" y="1" width="16" height="16" rx="1.8" fill="none" stroke="#ffffff" stroke-width="2"/><rect x="2" y="2" width="7" height="14" fill="#ffffff"/><path d="M2 2H7V3.8H4V6.9H2Z M2 11.2H4V14.5H7V16H2Z" fill="#455364"/></svg>
<svg style="left:827px;top:13px" width="21" height="21" viewBox="0 0 21 21"><defs><mask id="wm"><rect width="21" height="21" fill="#fff"/><path d="M15 6L23 -2" stroke="#000" stroke-width="4.2"/></mask></defs><g mask="url(#wm)"><circle cx="15" cy="6" r="5.6" fill="#ffffff"/><path d="M2.5 18.5L14 7" stroke="#ffffff" stroke-width="4.4"/></g></svg>
<svg style="left:882px;top:14px" width="18" height="19" viewBox="0 0 18 19"><path d="M8.8 0C4.3 0 4.6 2 4.6 2V4H9V4.7H3C3 4.7 0 4.4 0 9.1C0 13.8 2.6 13.6 2.6 13.6H4.2V11.4C4.2 11.4 4.1 8.8 6.8 8.8H11.1C11.1 8.8 13.6 8.8 13.6 6.4V2.4C13.6 2.4 14 0 8.8 0Z" fill="#3c78aa"/><circle cx="6.5" cy="2.2" r="0.9" fill="#455364"/><path d="M9.2 19C13.7 19 13.4 17 13.4 17V15H9V14.3H15C15 14.3 18 14.6 18 9.9C18 5.2 15.4 5.4 15.4 5.4H13.8V7.6C13.8 7.6 13.9 10.2 11.2 10.2H6.9C6.9 10.2 4.4 10.2 4.4 12.6V16.6C4.4 16.6 4 19 9.2 19Z" fill="#fdd63a"/><circle cx="11.5" cy="16.8" r="0.9" fill="#455364"/></svg>
<div style="left:919px;top:11px;width:252px;height:24px;background:#19232D;border-radius:4px;"></div>
<div style="left:1158px;top:11px;width:1px;height:24px;background:#455364;"></div>
<svg style="left:1161px;top:21px" width="8" height="5" viewBox="0 0 8 5"><path d="M0 0H8L4 4.5Z" fill="#455364"/></svg>
<div style="left:926px;top:14.82px;line-height:18px;font-family:'Liberation Sans', sans-serif;font-size:13.5px;color:#E0E1E3;letter-spacing:-0.003px;">rs/juanis/Documents/SpyderDocs</div>
<svg style="left:1190px;top:16px" width="19" height="14" viewBox="0 0 19 14"><path d="M1.5 0H6.2L7.9 1.7H15.6A1.4 1.4 0 0 1 17 3.1V4.1H1.8V10.5L0 13V1.5A1.5 1.5 0 0 1 1.5 0Z" fill="#ffffff"/><path d="M3.2 5.3H19L16.6 12.7A1.9 1.9 0 0 1 14.8 14H1.4A1.4 1.4 0 0 1 0 12.6Z" fill="#ffffff"/></svg>
<svg style="left:1246px;top:16px" width="14" height="14" viewBox="0 0 14 14"><path d="M7 0L14 7.3H10V14H4V7.3H0Z" fill="#ffffff"/></svg>
</div>
</body></html>
